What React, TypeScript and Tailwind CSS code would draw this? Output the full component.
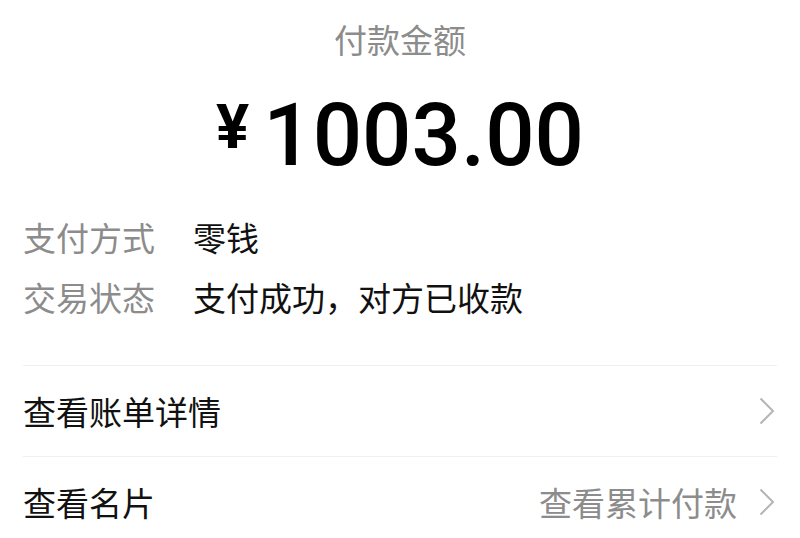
import React from 'react';

const cjk = { fontFamily: '"Noto Sans CJK SC", "Noto Sans", sans-serif' };

const Chevron = () => (
  <svg width="16" height="28" viewBox="0 0 16 28" fill="none" className="mr-[2px]">
    <polyline points="1.5,1.5 14,14 1.5,26.5" stroke="#b5b5b5" strokeWidth="2" strokeLinejoin="miter" />
  </svg>
);

const InfoRow = ({ label, value }: { label: string; value: string }) => (
  <div className="flex items-center h-[60px]">
    <span className="w-[170px] text-[33px] text-[#8c8c8c]">{label}</span>
    <span className="text-[33px] text-[#111]">{value}</span>
  </div>
);

const LinkRow = ({ title, extra }: { title: string; extra?: string }) => (
  <div className="flex items-center justify-between h-[91px] border-t border-[#f0f0f0]">
    <span className="text-[33px] text-[#111]">{title}</span>
    <div className="flex items-center gap-[22px]">
      {extra && <span className="text-[33px] text-[#8c8c8c]">{extra}</span>}
      <Chevron />
    </div>
  </div>
);

export default function App() {
  return (
    <div className="w-[800px] h-[538px] bg-white overflow-hidden leading-none" style={cjk}>
      <div className="pt-[23px] text-center text-[33px] text-[#8c8c8c]">付款金额</div>
      {/* yen sign sits top-aligned with the digits */}
      <div className="flex justify-center items-start mt-[36px] text-black" style={{ fontFamily: 'Roboto, "Liberation Sans", sans-serif' }}>
        <span className="text-[62px] font-bold mr-[14px] mt-[4px]">¥</span>
        <span className="text-[87px] font-medium">1003.00</span>
      </div>
      <div className="px-[23px] mt-[28px]">
        <InfoRow label="支付方式" value="零钱" />
        <InfoRow label="交易状态" value="支付成功，对方已收款" />
      </div>
      <div className="mx-[23px] mt-[38px]">
        <LinkRow title="查看账单详情" />
        <LinkRow title="查看名片" extra="查看累计付款" />
      </div>
    </div>
  );
}
